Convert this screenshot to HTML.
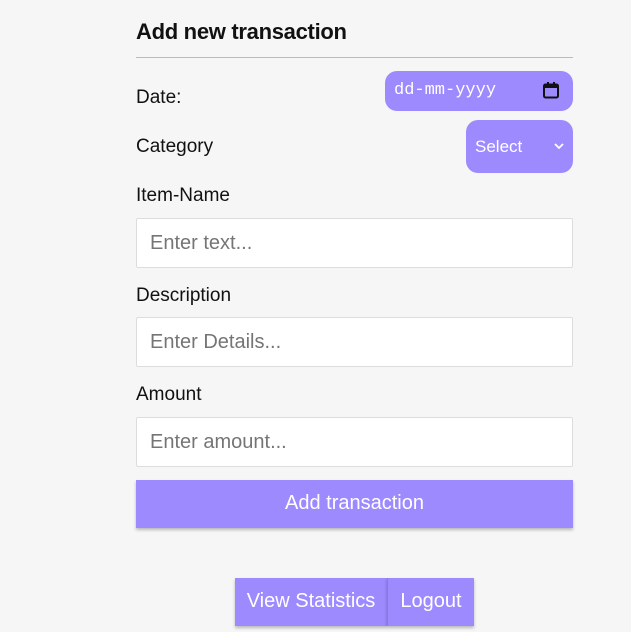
<!DOCTYPE html>
<html><head><style>
body{margin:0;width:631px;height:632px;background:#f6f6f6;font-family:"Liberation Sans",sans-serif;position:relative;overflow:hidden}
.a{position:absolute}
.lbl{font-size:19px;color:#111}
.inp{position:absolute;left:136px;background:#fff;border:1px solid #ddd;border-radius:2px;font-size:20px;color:#757575;line-height:48px;padding-left:13px;box-sizing:border-box;width:437px;height:50px}
.btn{background:#9d8aff;color:#fff;box-shadow:0 2px 3px rgba(0,0,0,.25)}
</style></head><body>
<div class="a" style="left:136px;top:19px;font-size:22px;font-weight:bold;color:#111;letter-spacing:-0.3px">Add new transaction</div>
<div class="a" style="left:136px;top:57px;width:437px;height:1px;background:#bbb"></div>
<div class="a lbl" style="left:136px;top:87px">Date:</div>
<div class="a" style="left:385px;top:71px;width:188px;height:40px;background:#9d8aff;border-radius:12px">
<span class="a" style="left:9px;top:10px;font-family:'Liberation Mono',monospace;font-size:17px;color:#fff">dd-mm-yyyy</span>
<svg class="a" style="left:158px;top:11px" width="16" height="17" viewBox="0 0 16 17"><rect x="1" y="2.5" width="14" height="13" rx="1.5" fill="none" stroke="#111" stroke-width="2"/><rect x="1" y="2.5" width="14" height="3.5" fill="#111"/><rect x="4" y="0" width="2" height="3" fill="#111"/><rect x="10" y="0" width="2" height="3" fill="#111"/></svg>
</div>
<div class="a lbl" style="left:136px;top:136px">Category</div>
<div class="a" style="left:466px;top:120px;width:107px;height:53px;background:#9d8aff;border-radius:12px">
<span class="a" style="left:9px;top:17px;font-size:17px;color:#fff">Select</span>
<svg class="a" style="left:88px;top:23px" width="10" height="7" viewBox="0 0 10 7"><path d="M1 1l4 4 4-4" fill="none" stroke="#fff" stroke-width="1.8"/></svg>
</div>
<div class="a lbl" style="left:136px;top:185px">Item-Name</div>
<div class="inp" style="top:218px">Enter text...</div>
<div class="a lbl" style="left:136px;top:285px">Description</div>
<div class="inp" style="top:317px">Enter Details...</div>
<div class="a lbl" style="left:136px;top:384px">Amount</div>
<div class="inp" style="top:417px">Enter amount...</div>
<div class="a btn" style="left:136px;top:480px;width:437px;height:48px;line-height:47px;text-align:center;font-size:20px">Add transaction</div>
<div class="a btn" style="left:235px;top:578px;width:152px;height:48px;line-height:47px;text-align:center;font-size:20px">View Statistics</div>
<div class="a btn" style="left:387px;top:578px;width:87px;height:48px;line-height:47px;text-align:center;font-size:20px;border-left:1px solid #8a78e6;box-sizing:border-box">Logout</div>
</body></html>
